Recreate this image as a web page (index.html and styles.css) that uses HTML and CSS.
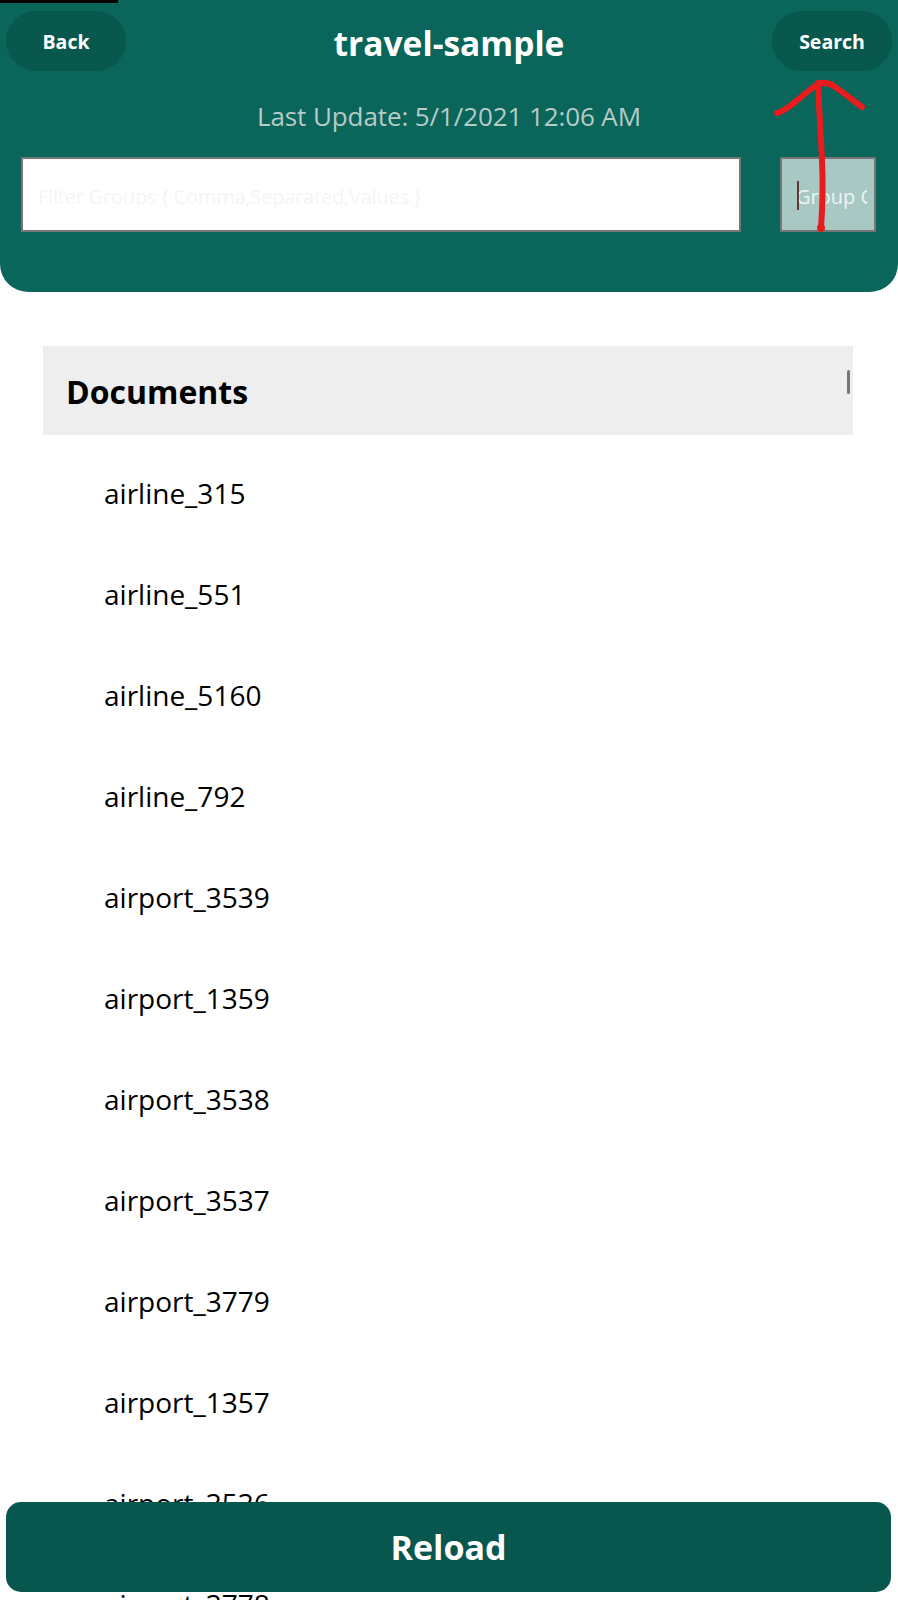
FILE: index.html
```html
<!DOCTYPE html>
<html lang="en">
<head>
  <meta charset="UTF-8">
  <title>travel-sample</title>
  <link rel="stylesheet" href="styles.css">
</head>
<body>
  <div class="screen">
    <div class="notch"></div>
    <header class="top">
      <div class="nav">
        <button class="pill">Back</button>
        <h1>travel-sample</h1>
        <button class="pill">Search</button>
      </div>
      <p class="updated">Last Update: 5/1/2021 12:06 AM</p>
      <div class="filters">
        <div class="field filter"><span>Filter Groups { Comma,Separated,Values }</span></div>
        <div class="field group"><i class="caret"></i><span>Group Count</span></div>
      </div>
    </header>

    <section class="docs">
      <div class="docs-head">
        <h2>Documents</h2>
        <i class="thumb"></i>
      </div>
      <ul class="doc-list">
        <li>airline_315</li>
        <li>airline_551</li>
        <li>airline_5160</li>
        <li>airline_792</li>
        <li>airport_3539</li>
        <li>airport_1359</li>
        <li>airport_3538</li>
        <li>airport_3537</li>
        <li>airport_3779</li>
        <li>airport_1357</li>
        <li>airport_3536</li>
        <li>airport_3778</li>
      </ul>
    </section>

    <button class="reload">Reload</button>

    <!-- red arrow scribbled over the screenshot -->
    <svg class="scribble" width="898" height="240" viewBox="0 0 898 240">
      <path d="M821 228C823 200 823 180 822 160C821 135 819 110 818 83" />
      <path d="M777 113C781 112 784 110 787 108C798 101 808 90 818 84C823 82 828 83 832 85C842 91 852 100 862 107" />
      <circle cx="821" cy="228" r="4" />
    </svg>
  </div>
</body>
</html>
```

FILE: styles.css
```css
* {
  box-sizing: border-box;
}

body {
  margin: 0;
  background: #ffffff;
  font-family: "Open Sans", "Noto Sans", sans-serif;
}

.screen {
  position: relative;
  height: 1600px;
  overflow: hidden;
}

.notch {
  position: absolute;
  top: 0;
  left: 0;
  width: 118px;
  height: 3px;
  background: #000000;
}

.top {
  height: 292px;
  padding: 11px 6px 0;
  background: #0a655b;
  border-radius: 0 0 28px 28px;
}

.nav {
  display: flex;
  justify-content: space-between;
  align-items: center;
}

.pill {
  width: 120px;
  height: 60px;
  border: none;
  border-radius: 30px;
  background: #08584e;
  color: #ffffff;
  font-family: inherit;
  font-size: 19.5px;
  font-weight: 700;
}

h1 {
  margin: 4px 0 0;
  color: #ffffff;
  font-size: 33.5px;
  font-weight: 700;
}

.updated {
  margin: 29px 0 0;
  color: #b7cbc7;
  font-size: 26px;
  line-height: 32px;
  letter-spacing: -0.1px;
  text-align: center;
}

.filters {
  display: flex;
  justify-content: space-between;
  margin: 25px 16px 0 15px;
}

.field {
  display: flex;
  align-items: center;
  height: 75px;
  padding-top: 3px;
  border: 2px solid #767676;
  font-size: 20px;
  white-space: nowrap;
  overflow: hidden;
}

.filter {
  width: 720px;
  padding-left: 15px;
  background: #ffffff;
  color: #f4f5f5;
  letter-spacing: -0.2px;
}

.group {
  position: relative;
  width: 96px;
  padding-left: 14px;
  background: #a8c8c4;
  color: #eef4f3;
}

.group span {
  width: 71px;
  overflow: hidden;
}

.caret {
  position: absolute;
  left: 15px;
  top: 22px;
  width: 2px;
  height: 29px;
  background: #5c3a3a;
}

.docs {
  margin: 54px 45px 0 43px;
}

.docs-head {
  position: relative;
  height: 89px;
  padding: 2px 23px 0;
  display: flex;
  align-items: center;
  background: #eeeeee;
}

h2 {
  margin: 0;
  color: #000000;
  font-size: 32px;
  font-weight: 700;
}

.thumb {
  position: absolute;
  top: 24px;
  right: 3px;
  width: 3px;
  height: 24px;
  border-radius: 2px;
  background: #777777;
}

.doc-list {
  margin: 0;
  padding: 8px 0 0 61px;
  list-style: none;
}

.doc-list li {
  height: 101px;
  color: #000000;
  font-size: 28px;
  line-height: 101px;
}

.reload {
  position: absolute;
  left: 6px;
  top: 1502px;
  width: 885px;
  height: 90px;
  border: none;
  border-radius: 15px;
  background: #08574e;
  color: #ffffff;
  font-family: inherit;
  font-size: 34px;
  font-weight: 700;
}

.scribble {
  position: absolute;
  top: 0;
  left: 0;
  pointer-events: none;
}

.scribble path {
  fill: none;
  stroke: #e81c1c;
  stroke-width: 6;
  stroke-linecap: round;
  stroke-linejoin: round;
}

.scribble circle {
  fill: #e81c1c;
}
```
